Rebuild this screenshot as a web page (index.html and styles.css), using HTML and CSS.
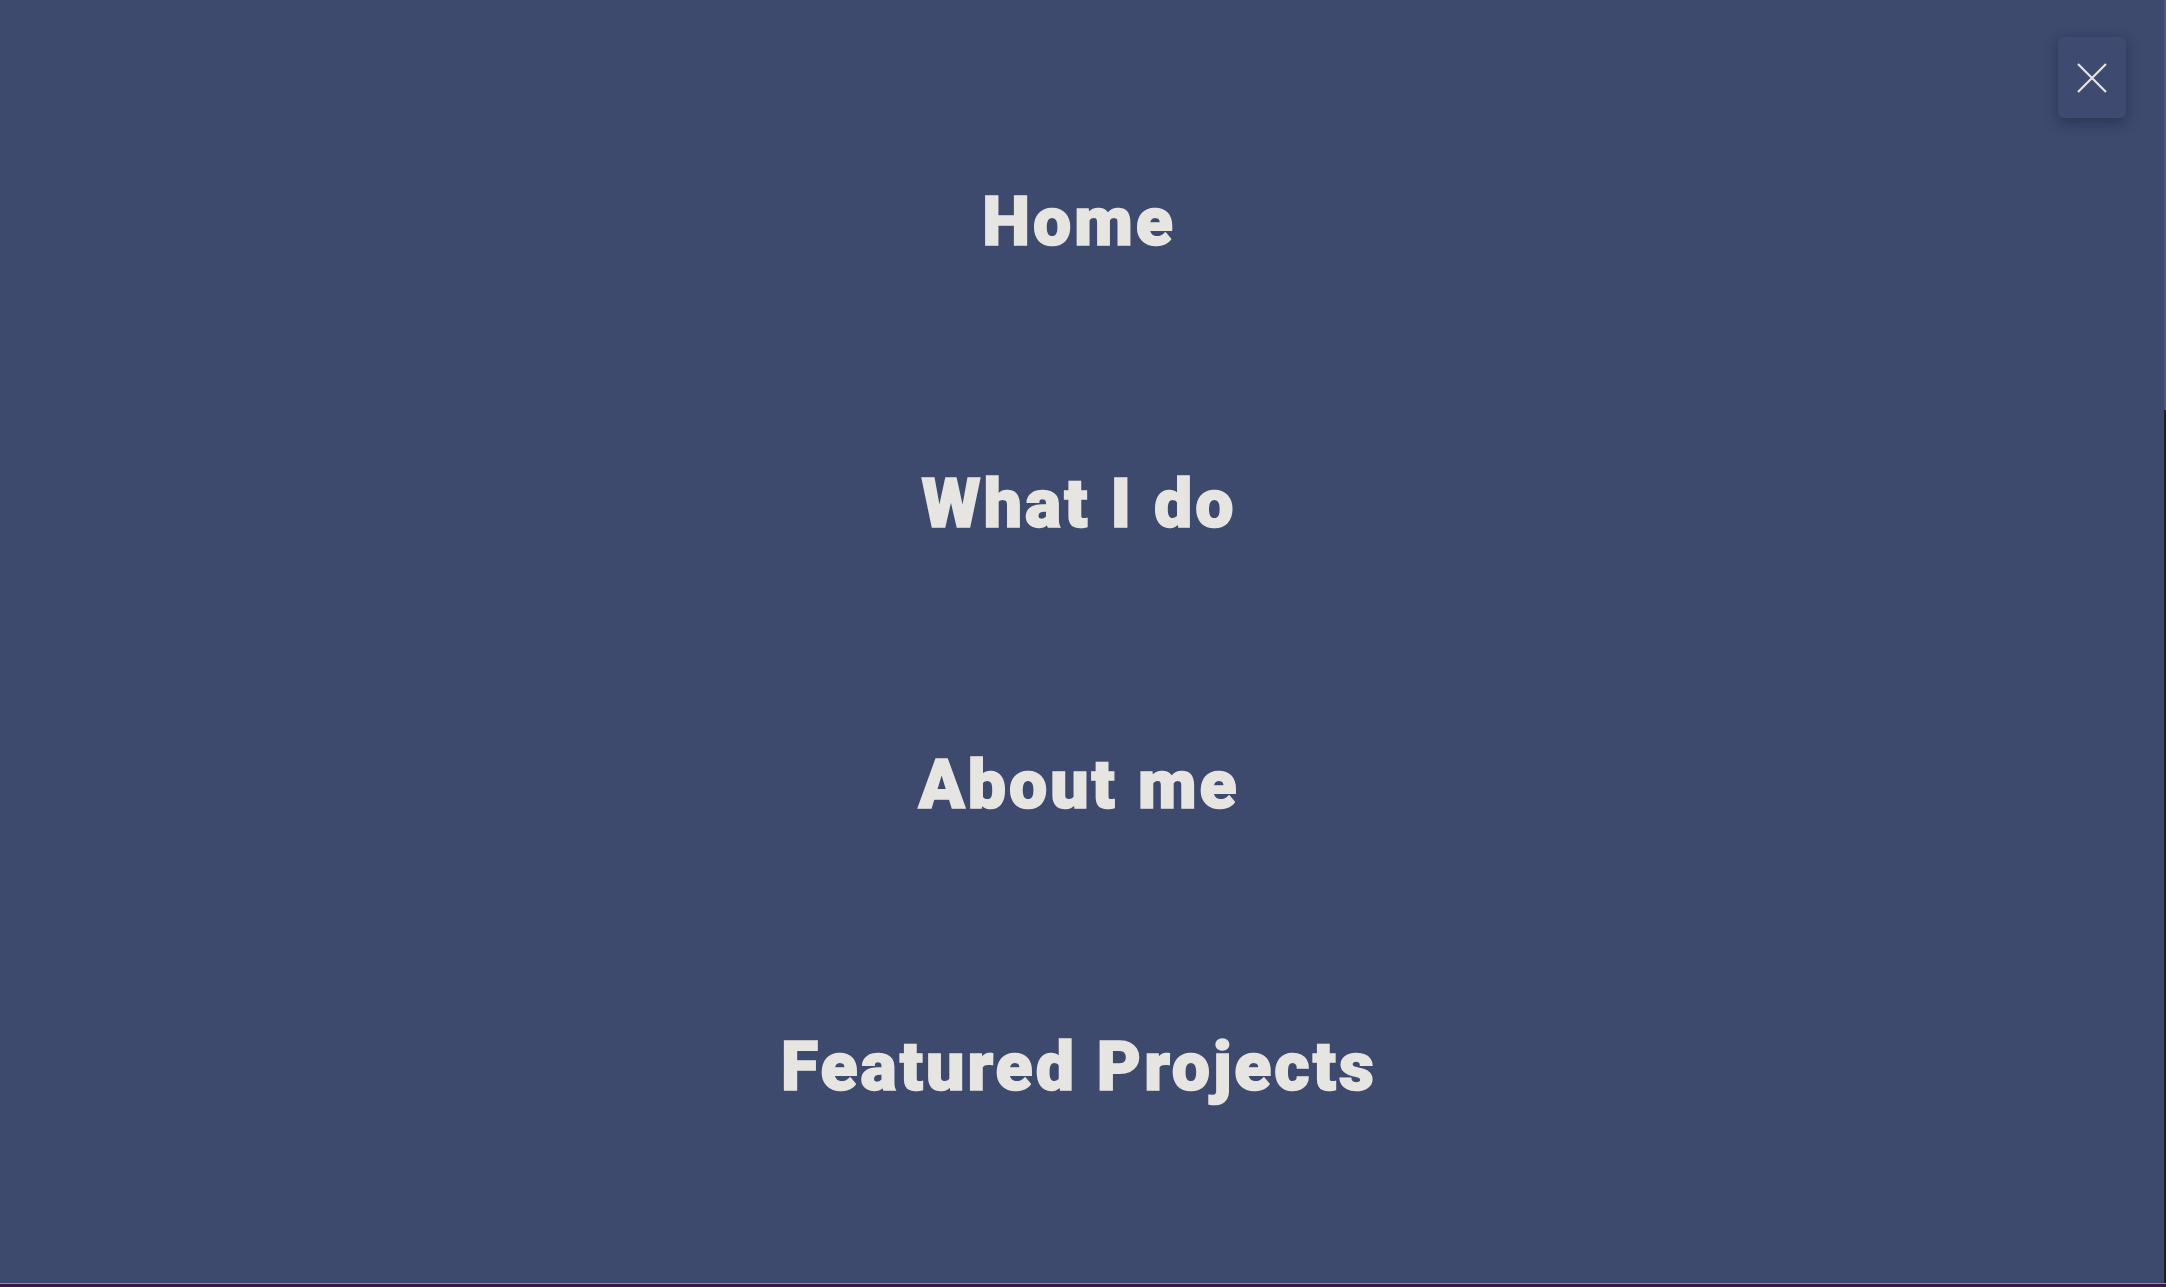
FILE: index.html
```html
<!DOCTYPE html>
<html lang="en">
<head>
<meta charset="utf-8">
<title>Menu</title>
<link rel="stylesheet" href="styles.css">
</head>
<body>
<div class="frame">
  <nav class="overlay">
    <ul class="menu">
      <li class="menu-item"><a class="menu-link" href="#home">Home</a></li>
      <li class="menu-item"><a class="menu-link" href="#what">What I do</a></li>
      <li class="menu-item"><a class="menu-link" href="#about">About me</a></li>
      <li class="menu-item"><a class="menu-link" href="#projects">Featured Projects</a></li>
    </ul>
    <button class="close-btn" aria-label="Close menu">
      <svg class="close-icon" width="30" height="30" viewBox="0 0 30 30" aria-hidden="true">
        <path d="M1 1 L29 29 M29 1 L1 29" stroke="#e6e4e1" stroke-width="2.2" fill="none" stroke-linecap="butt"/>
      </svg>
    </button>
  </nav>
  <div class="scroll-edge">
    <div class="scroll-thumb"></div>
    <div class="scroll-track"></div>
  </div>
</div>
<div class="page-bottom"></div>
</body>
</html>
```
FILE: styles.css
```css
html, body {
  margin: 0;
  padding: 0;
  height: 100%;
  overflow: hidden;
}
body {
  background: #3a1840;
  font-family: Roboto, "Open Sans", sans-serif;
}
.frame {
  display: flex;
  height: 1283px;
  border-bottom: 1px solid #8a8f9c;
}
.overlay {
  position: relative;
  flex: 1;
  background: #3d496d;
  padding: 0 9px 0 0;
}
.menu {
  list-style: none;
  margin: 0;
  padding: 88px 0 0;
  display: flex;
  flex-direction: column;
}
.menu-item {
  height: 281.67px;
  display: flex;
  justify-content: center;
  align-items: flex-start;
}
.menu-link {
  color: #e7e5e2;
  text-decoration: none;
  font-weight: 900;
  font-size: 68px;
  line-height: 1;
  padding: 100px 0 0 3px;
  letter-spacing: 3px;
  -webkit-text-stroke: 1.6px #e7e5e2;
}
.close-btn {
  position: absolute;
  top: 37px;
  right: 38px;
  width: 68px;
  height: 81px;
  border: none;
  border-radius: 6px;
  background: #3e4a6f;
  box-shadow: 0 4px 14px rgba(10, 15, 35, 0.35);
  display: flex;
  align-items: center;
  justify-content: center;
  padding: 0;
  cursor: pointer;
}
.close-icon {
  display: block;
}
.scroll-edge {
  width: 2px;
  display: flex;
  flex-direction: column;
}
.scroll-thumb {
  height: 410px;
  background: #4f5870;
}
.scroll-track {
  flex: 1;
  background: #1c2228;
}
.page-bottom {
  height: 3px;
  background: #3a1840;
}
```
